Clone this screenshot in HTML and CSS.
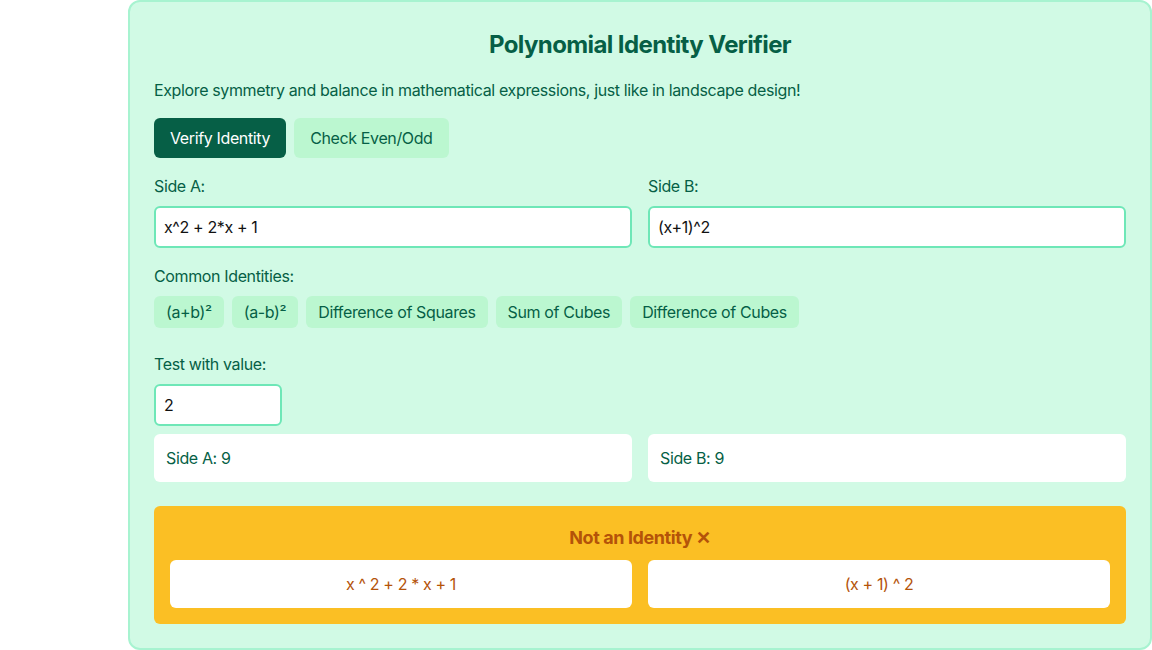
FILE: index.html
```html
<!DOCTYPE html>
<html lang="en">
    <head>
        <meta charset="UTF-8">
        <meta name="viewport" content="width=device-width, initial-scale=1.0">
        <title>Polynomial Identity Verifier</title>
        <link rel="stylesheet" href="styles.css">
    </head>

    <body>
        <main class="verifier">
            <h1 class="title">Polynomial Identity Verifier</h1>
            <p class="intro">Explore symmetry and balance in mathematical expressions, just like in landscape design!</p>

            <div class="modes">
                <button class="mode active">Verify Identity</button>
                <button class="mode">Check Even/Odd</button>
            </div>

            <div class="sides">
                <div class="field">
                    <label for="sideA">Side A:</label>
                    <input id="sideA" class="expr" type="text" value="x^2 + 2*x + 1">
                </div>
                <div class="field">
                    <label for="sideB">Side B:</label>
                    <input id="sideB" class="expr" type="text" value="(x+1)^2">
                </div>
            </div>

            <div class="presets">
                <span class="label">Common Identities:</span>
                <div class="chips">
                    <button class="chip">(a+b)²</button>
                    <button class="chip">(a-b)²</button>
                    <button class="chip">Difference of Squares</button>
                    <button class="chip">Sum of Cubes</button>
                    <button class="chip">Difference of Cubes</button>
                </div>
            </div>

            <div class="test">
                <label for="testValue">Test with value:</label>
                <input id="testValue" class="expr small" type="text" value="2">
            </div>

            <div class="values">
                <div class="value">Side A: 9</div>
                <div class="value">Side B: 9</div>
            </div>

            <section class="result">
                <h2 class="result-title">Not an Identity ✕</h2>
                <div class="values">
                    <div class="value centered">x ^ 2 + 2 * x + 1</div>
                    <div class="value centered">(x + 1) ^ 2</div>
                </div>
            </section>
        </main>
    </body>
</html>
```

FILE: styles.css
```css
* {
    box-sizing: border-box;
    font-family: 'Inter', 'Noto Sans', sans-serif;
    letter-spacing: -0.023em;
}

body {
    margin: 0;
    background: #fff;
}

.verifier {
    margin-left: 128px;
    width: 1024px;
    padding: 24px;
    background: #d1fae5;
    border: 2px solid #a7f3d0;
    border-radius: 12px;
    color: #065f46;
    display: flex;
    flex-direction: column;
}

.title {
    margin: 3px 0 0;
    font-size: 24px;
    line-height: 32px;
    font-weight: 700;
    text-align: center;
    letter-spacing: -0.025em;
}

.intro {
    margin: 17px 0 0;
    font-size: 16px;
    line-height: 24px;
}

.modes {
    margin-top: 16px;
    display: flex;
    gap: 8px;
}

button {
    border: none;
    font-size: 16px;
    line-height: 24px;
    color: #065f46;
    border-radius: 6px;
}

.mode {
    padding: 8px 16px;
    background: #bbf7d0;
}

.mode.active {
    background: #065f46;
    color: #fff;
}

.sides,
.values {
    display: grid;
    grid-template-columns: 1fr 1fr;
    gap: 16px;
}

.sides {
    margin-top: 16px;
}

.field,
.test {
    display: flex;
    flex-direction: column;
    gap: 8px;
}

label,
.label {
    font-size: 16px;
    line-height: 24px;
}

.expr {
    height: 42px;
    padding: 0 8px;
    border: 2px solid #6ee7b7;
    border-radius: 6px;
    background: #fff;
    font-size: 16px;
    color: #111;
    outline: none;
}

.expr.small {
    width: 128px;
}

.presets {
    margin-top: 16px;
    display: flex;
    flex-direction: column;
    gap: 8px;
}

.chips {
    display: flex;
    gap: 8px;
}

.chip {
    padding: 4px 12px;
    background: #bbf7d0;
}

.test {
    margin-top: 24px;
}

.verifier > .values {
    margin-top: 8px;
}

.value {
    background: #fff;
    border-radius: 6px;
    padding: 12px;
    font-size: 16px;
    line-height: 24px;
}

.result {
    margin-top: 24px;
    padding: 18px 16px 16px;
    background: #fbbf24;
    border-radius: 6px;
    color: #b45309;
}

.result-title {
    margin: 0 0 8px;
    font-size: 18px;
    line-height: 28px;
    font-weight: 700;
    text-align: center;
}

.value.centered {
    text-align: center;
    color: #b45309;
}
```
